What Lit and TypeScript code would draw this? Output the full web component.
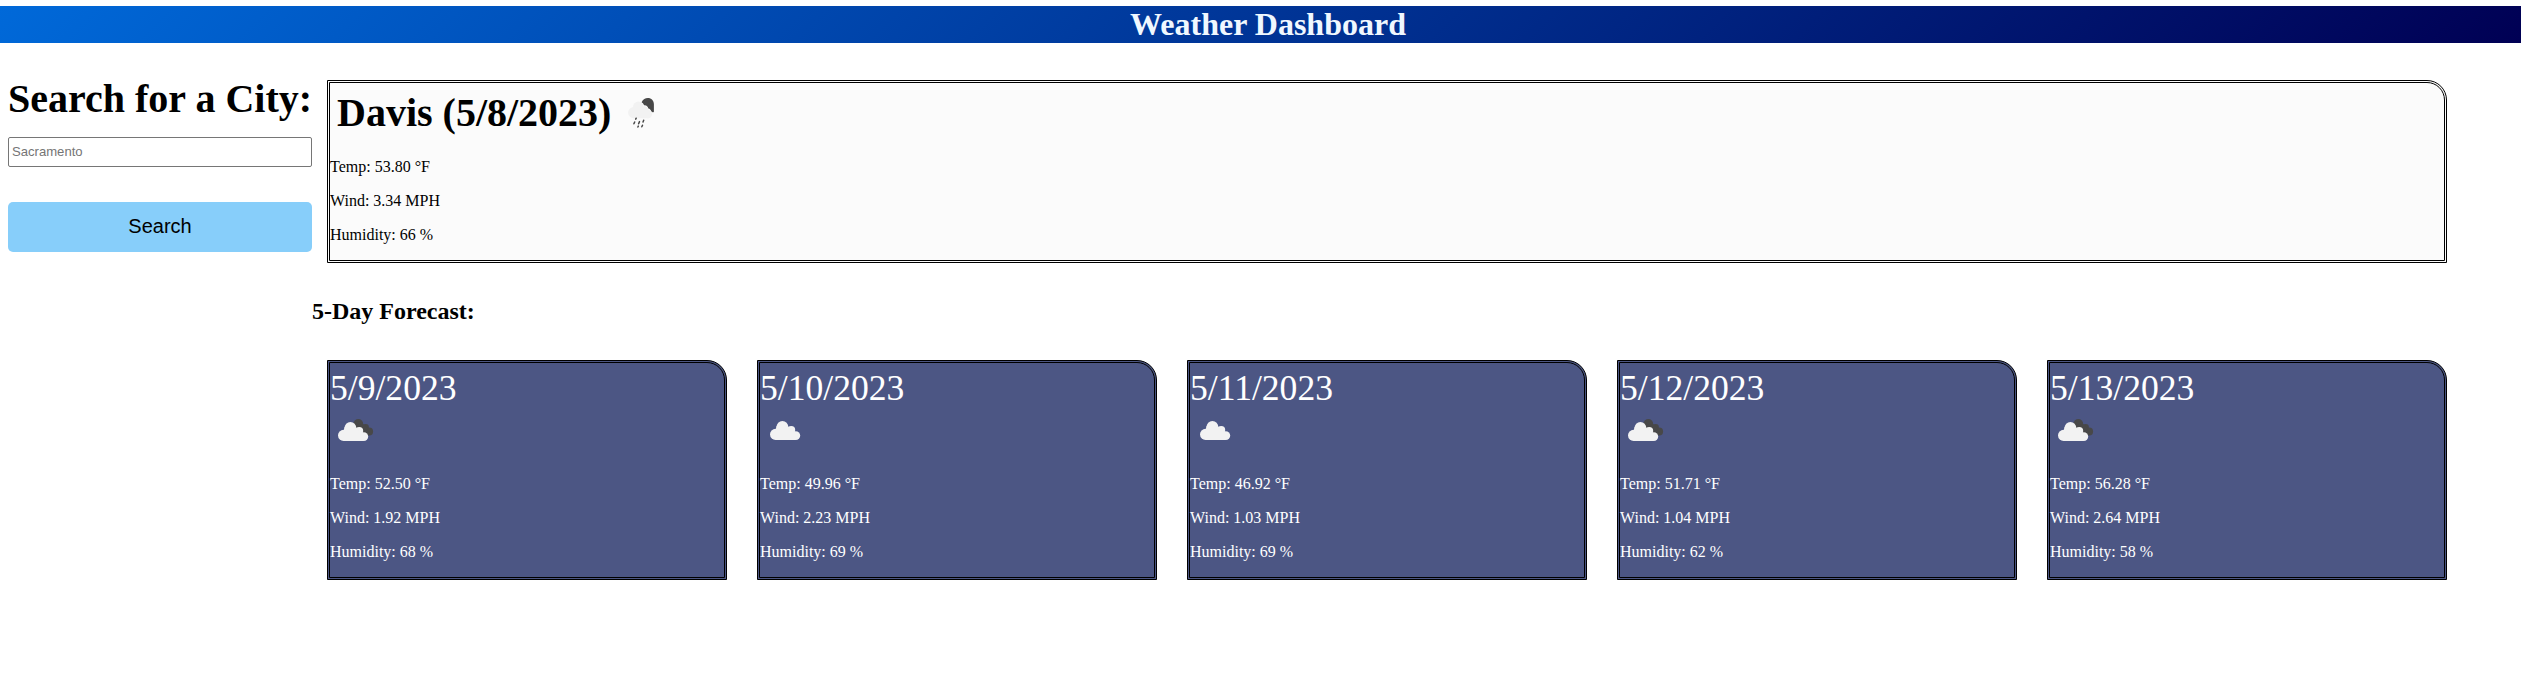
import { LitElement, html, svg, css } from "lit";
import { customElement, property } from "lit/decorators.js";

type Icon = "broken" | "few" | "rain";

interface Day {
  date: string;
  icon: Icon;
  temp: string;
  wind: string;
  humidity: number;
}

const days: Day[] = [
  { date: "5/9/2023", icon: "broken", temp: "52.50", wind: "1.92", humidity: 68 },
  { date: "5/10/2023", icon: "few", temp: "49.96", wind: "2.23", humidity: 69 },
  { date: "5/11/2023", icon: "few", temp: "46.92", wind: "1.03", humidity: 69 },
  { date: "5/12/2023", icon: "broken", temp: "51.71", wind: "1.04", humidity: 62 },
  { date: "5/13/2023", icon: "broken", temp: "56.28", wind: "2.64", humidity: 58 },
];

const cloud = svg`
  <g fill="#f2f2f2">
    <circle cx="13.6" cy="30.4" r="5.6"/>
    <circle cx="20.4" cy="22.9" r="5.9"/>
    <circle cx="29.2" cy="26" r="4"/>
    <circle cx="33.8" cy="31.6" r="4.4"/>
    <path d="M13.6 36V26l1-4h11l4 4 4 3v7z"/>
  </g>`;

const pictures = {
  broken: svg`
    <g fill="#484848">
      <circle cx="28.3" cy="18.9" r="4.9"/>
      <circle cx="35.6" cy="22.4" r="3.3"/>
      <circle cx="39.2" cy="26.5" r="3.9"/>
      <path d="M26 20l7-1 5 4-1 7-6-2z"/>
    </g>
    ${cloud}`,
  few: svg`<g transform="translate(2 -1)">${cloud}</g>`,
  rain: svg`
    <path fill="#484848" d="M23.6 14.2C25 11.4 27.3 10.1 29.8 10.1c3.6 0 6.1 2.7 6.1 6.2v7.4c-.6.9-1.9.8-2.6-.2-.5-1.7-1.5-2.7-3-3-.3-2.2-2.1-3.6-4.2-3.2-.5-1.3-1.3-2.3-2.5-3.1z"/>
    <g fill="#f2f2f2">
      <circle cx="15.7" cy="24.6" r="5.6"/>
      <circle cx="20.3" cy="18.9" r="5.3"/>
      <circle cx="26.6" cy="21.9" r="3.7"/>
      <circle cx="30" cy="26.1" r="4.2"/>
      <path d="M15.7 30.2V20h10l5 4v6.3z"/>
    </g>
    <g stroke="#484848" stroke-width="1.5" stroke-linecap="round">
      <path d="M18.2 30.2l-.5 1M16.7 34l-.8 1.8M21.5 33.6l-.9 2.1M25.7 32.2l-.7 1.8M20.3 38.1l-.4.9M24.5 37.3l-.7 1.5"/>
    </g>`,
};

@customElement("weather-icon")
class WeatherIcon extends LitElement {
  static styles = css`
    :host { display: block; width: 50px; height: 50px; }
    svg { display: block; }
  `;
  @property() name: Icon = "few";
  render() {
    return html`<svg width="50" height="50" viewBox="0 0 50 50">${pictures[this.name]}</svg>`;
  }
}

@customElement("app-root")
class AppRoot extends LitElement {
  static styles = css`
    :host {
      display: block;
      padding-top: 6px;
      font: 16px/18px "Liberation Serif", "Times New Roman", serif;
      color: #000;
    }
    * { box-sizing: border-box; }
    h1, h2, h3, p { margin: 0; }
    .banner {
      height: 37px;
      padding-left: 15px;
      background: linear-gradient(135deg, #0069d9, #000054);
      color: aliceblue;
      text-align: center;
      font-size: 32px;
      line-height: 37px;
      font-weight: bold;
    }
    .layout { display: flex; align-items: flex-start; }
    .search {
      width: 312px;
      padding: 33px 0 0 8px;
      display: flex;
      flex-direction: column;
    }
    .search h2 { font-size: 40px; line-height: 46px; white-space: nowrap; }
    .field {
      margin-top: 15px;
      height: 30px;
      border: 1px solid #767676;
      border-radius: 2px;
      padding: 0 3px 2px;
      font: 13.1px "Liberation Sans", Arial, sans-serif;
    }
    .field::placeholder { color: #757575; }
    .go {
      margin-top: 35px;
      height: 50px;
      padding: 0 0 2px;
      border: 0;
      border-radius: 5px;
      background: lightskyblue;
      color: #000;
      font: 20px "Liberation Sans", Arial, sans-serif;
    }
    .results { width: 2135px; padding-top: 37px; }
    .card {
      border: 3px double #000;
      border-top-right-radius: 20px;
    }
    .current {
      height: 183px;
      margin-left: 15px;
      background: #fbfbfb;
    }
    .place { display: flex; height: 75px; padding-left: 7px; }
    .place h2 { font-size: 40px; line-height: 46px; padding-top: 7px; }
    .place weather-icon { margin: 5px 0 0 7px; }
    .stat + .stat { margin-top: 16px; }
    .heading { font-size: 24px; line-height: 28px; margin-top: 34px; }
    .forecast {
      display: grid;
      grid-template-columns: repeat(5, 400px);
      gap: 30px;
      margin: 35px 0 0 15px;
    }
    .day {
      height: 220px;
      background: #4c5684;
      color: #fff;
    }
    .date { font-size: 35.6px; line-height: 42px; padding-top: 4px; }
    .day weather-icon { margin: -4px 0 20px; }
  `;

  stats(temp: string, wind: string, humidity: number) {
    return html`
      <p class="stat">Temp: ${temp} °F</p>
      <p class="stat">Wind: ${wind} MPH</p>
      <p class="stat">Humidity: ${humidity} %</p>`;
  }

  render() {
    return html`
      <h1 class="banner">Weather Dashboard</h1>
      <div class="layout">
        <aside class="search">
          <h2>Search for a City:</h2>
          <input class="field" placeholder="Sacramento" />
          <button class="go">Search</button>
        </aside>
        <main class="results">
          <section class="card current">
            <div class="place">
              <h2>Davis (5/8/2023)</h2>
              <weather-icon name="rain"></weather-icon>
            </div>
            ${this.stats("53.80", "3.34", 66)}
          </section>
          <h3 class="heading">5-Day Forecast:</h3>
          <section class="forecast">
            ${days.map(
              (d) => html`
                <article class="card day">
                  <p class="date">${d.date}</p>
                  <weather-icon name=${d.icon}></weather-icon>
                  ${this.stats(d.temp, d.wind, d.humidity)}
                </article>`
            )}
          </section>
        </main>
      </div>`;
  }
}
